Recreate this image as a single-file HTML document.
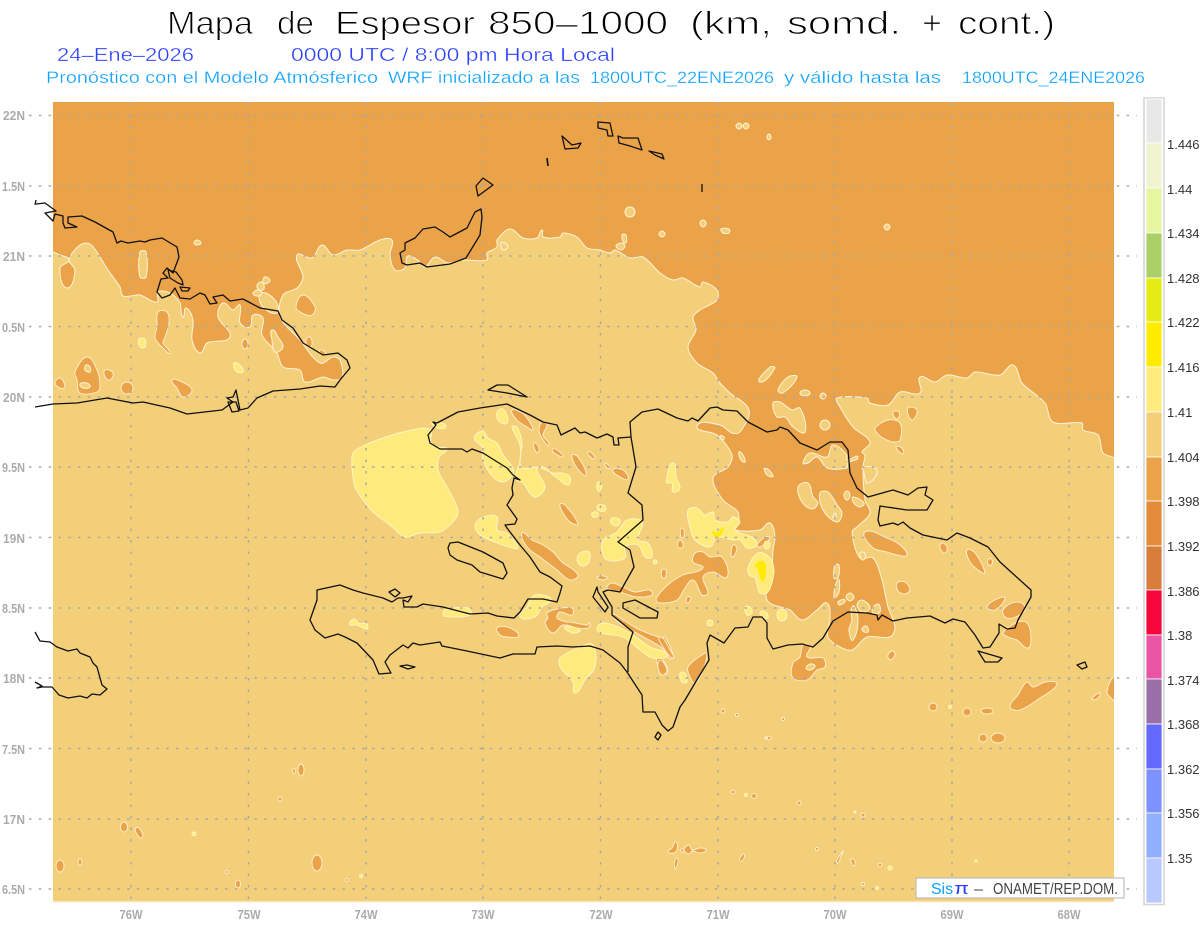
<!DOCTYPE html>
<html><head><meta charset="utf-8"><title>Mapa de Espesor</title>
<style>
html,body{margin:0;padding:0;background:#fff;width:1200px;height:927px;overflow:hidden}
svg{display:block;font-family:"Liberation Sans",sans-serif}
.l{fill:#F3CF7A;stroke:#FFF3D6;stroke-width:1;stroke-linejoin:round}
.d{fill:#EBA349;stroke:#FFF0D0;stroke-width:.9;stroke-linejoin:round}
.y{fill:#FFEB7D;stroke:#FFF6C8;stroke-width:.9;stroke-linejoin:round}
.o{fill:#FFEB00;stroke:none}
.c{fill:none;stroke:#111;stroke-width:1.3;stroke-linejoin:round}
.g{fill:none;stroke:#A8A8A8;stroke-width:1.5}
.a{fill:#ABABAB;font-weight:bold;font-size:13px}
.b{fill:#333;font-size:13px}
.t{stroke:#fff}
.t1{font-size:32px;fill:#000;stroke-width:.95px}
.t2{font-size:18px;fill:#2A3FFF;stroke-width:.35px}
.t3{font-size:16.5px;fill:#0AA0FF;stroke-width:.28px}
</style></head><body>
<svg width="1200" height="927" viewBox="0 0 1200 927" xmlns="http://www.w3.org/2000/svg">
<rect width="1200" height="927" fill="#fff"/>
<g class="t t1">
<text x="167" y="34" textLength="86" lengthAdjust="spacingAndGlyphs">Mapa</text>
<text x="277" y="34" textLength="37" lengthAdjust="spacingAndGlyphs">de</text>
<text x="335" y="34" textLength="140" lengthAdjust="spacingAndGlyphs">Espesor</text>
<text x="488" y="34" textLength="180" lengthAdjust="spacingAndGlyphs">850–1000</text>
<text x="690" y="34" textLength="82" lengthAdjust="spacingAndGlyphs">(km,</text>
<text x="787" y="34" textLength="114" lengthAdjust="spacingAndGlyphs">somd.</text>
<text x="922" y="34" textLength="20" lengthAdjust="spacingAndGlyphs">+</text>
<text x="958" y="34" textLength="97" lengthAdjust="spacingAndGlyphs">cont.)</text>
</g>
<g class="t t2">
<text x="57" y="61" textLength="137" lengthAdjust="spacingAndGlyphs">24–Ene–2026</text>
<text x="291" y="61" textLength="324" lengthAdjust="spacingAndGlyphs">0000 UTC / 8:00 pm Hora Local</text>
</g>
<g class="t t3">
<text x="46" y="83" textLength="332" lengthAdjust="spacingAndGlyphs">Pronóstico con el Modelo Atmósferico</text>
<text x="388" y="83" textLength="192" lengthAdjust="spacingAndGlyphs">WRF inicializado a las</text>
<text x="590" y="83" textLength="184" lengthAdjust="spacingAndGlyphs">1800UTC_22ENE2026</text>
<text x="784" y="83" textLength="157" lengthAdjust="spacingAndGlyphs">y válido hasta las</text>
<text x="962" y="83" textLength="183" lengthAdjust="spacingAndGlyphs">1800UTC_24ENE2026</text>
</g>

<rect x="53" y="102" width="1061" height="799" fill="#EBA349"/>
<rect x="53" y="901" width="1061" height="1.5" fill="#FBE9C0"/>
<clipPath id="mp"><rect x="53" y="102" width="1061" height="799"/></clipPath>
<g clip-path="url(#mp)">
<path class="l" d="M52 253L60 255 69 260 60 268 67 288 75 270 69 260 80 245 90 244 100 257 108 270 120 287 123 296 140 295 157 302 158 292 170 293 180 303 183 317 186 308 193 320 192 340 200 353 207 343 230 337 218 317 223 303 233 310 240 305 240 323 250 327 253 315 263 318 262 335 277 353 283 367 300 370 305 382 323 377 333 380 342 378 340 360 333 357 320 363 300 340 280 317 283 295 297 288 303 277 297 255 312 258 322 245 333 255 347 250 360 250 380 240 392 240 390 255 395 270 405 268 408 256 420 262 425 267 435 257 448 263 462 260 487 260 487 253 497 247 497 240 510 229 523 238 537 238 542 230 543 237 560 237 563 233 577 237 587 248 600 250 610 253 615 250 630 258 643 257 660 273 673 280 683 278 700 287 703 282 717 290 717 300 700 310 693 317 696 330 688 347 697 363 713 373 720 383 730 393 749 410 740 432 732 433 720 425 697 426 717 435 732 455 728 467 713 478 723 500 738 512 738 525 735 530 760 530 770 523 775 537 773 550 772 573 767 600 790 610 802 620 817 610 827 603 830 618 828 637 840 647 852 650 867 637 890 637 895 627 888 607 882 580 873 558 860 558 852 532 857 527 870 513 865 500 863 467 865 455 862 452 870 442 853 427 840 407 837 398 867 398 870 403 888 405 900 392 920 393 920 377 935 382 947 375 967 378 975 372 1000 375 1013 365 1022 383 1045 403 1053 422 1082 423 1083 430 1098 435 1103 453 1115 460 1115 902 52 902Z"/>
<!-- west Cuba dark patches -->
<path class="d" d="M158 312L167 312 169 323 165 337 163 343 170 353 163 348 155 338 157 327Z"/>
<path class="d" d="M87 357L97 370 100 387 97 392 80 393 77 380 75 372Z"/>
<path class="d" d="M55 383L60 378 65 387 60 388Z"/>
<path class="d" d="M105 370L113 373 110 380 105 377Z"/>
<circle class="d" cx="127" cy="388" r="6"/>
<path class="d" d="M172 380L182 382 192 390 183 397 177 388Z"/>
<path class="d" d="M303 295L315 307 312 315 302 313 296 307Z"/>
<ellipse class="d" cx="245" cy="344" rx="3" ry="5"/>
<path class="l" d="M86 365L90 367 90 372 85 370ZM80 384L87 383 90 387 83 388ZM140 252L146 252 146 277 140 277ZM272 330L278 337 283 347 275 352 272 340ZM261 293L275 300 277 313 262 306Z"/>
<path class="y" d="M139 339L145 339 145 347 140 347ZM234 363L240 365 243 372 236 371Z"/>
<path class="d" d="M306 340L310 337 312 345 308 347ZM320 350L325 352 325 355 321 354Z"/>
<!-- gonaives -->
<path class="d" d="M512 410L522 413 527 418 533 430 527 427 517 420Z"/>
<path class="d" d="M542 422L547 425 543 435 549 445 542 438 539 430Z"/>
<path class="d" d="M534 443L539 448 537 453Z"/>
<path class="d" d="M553 448L563 455 562 457 553 452Z"/>
<path class="d" d="M572 455L578 457 586 475 577 468Z"/>
<path class="d" d="M588 452L595 457 593 459Z"/>
<path class="d" d="M605 463L610 468 607 468Z"/>
<path class="d" d="M613 470L623 470 628 479 620 477Z"/>
<path class="d" d="M560 504L565 505 578 524 570 522 563 513Z"/>
<path class="d" d="M522 533L532 540 543 545 553 552 562 562 578 575 570 580 557 570 540 557 528 548Z"/>
<path class="d" d="M612 583L623 587 635 592 650 590 652 595 637 597 623 593 607 588Z"/>
<path class="d" d="M597 577L607 577 603 580Z"/>
<path class="d" d="M660 593L670 583 683 575 703 568 693 562 695 553 703 552 710 557 722 557 727 577 713 572 703 577 708 593 702 595 693 580 685 588 677 600 660 603 656 600Z"/>
<path class="d" d="M662 570L666 570 665 578 662 577Z"/>
<path class="d" d="M687 597L691 598 687 603Z"/>
<path class="d" d="M547 613L557 609 572 608 572 615 560 612 557 618 567 622 570 622 587 625 590 623 588 628 577 628 563 625 553 633 545 623 548 618Z"/>
<path class="d" d="M497 628L507 627 518 633 518 637 507 637 500 635Z"/>
<path class="d" d="M613 615L623 620 640 630 662 638 665 637 673 655 670 659 662 648 640 635 623 625Z"/>
<path class="d" d="M657 658L663 660 668 673 662 673 657 663Z"/>
<path class="d" d="M688 667L705 653 707 655 703 670 695 683 690 677Z"/>
<path class="d" d="M660 637L670 650 673 658 665 650Z"/>
<path class="d" d="M660 660L667 670 662 675 658 667Z"/>
<!-- central yellow -->
<path class="y" d="M688 510L697 508 705 515 713 512 715 520 728 522 733 517 740 522 735 530 752 537 757 543 755 547 747 548 740 540 733 540 717 537 710 547 695 540 690 527Z"/>
<path class="o" d="M712 532L718 532 723 528 722 534 717 537Z"/>
<path class="y" d="M748 568L758 553 770 558 774 572 768 592 760 593 755 578 749 575Z"/>
<path class="o" d="M755 565L763 561 766 570 763 582 760 577 758 570Z"/>
<path class="y" d="M667 477L673 463 676 477 680 488 673 492 672 483 667 483Z"/>
<path class="d" d="M680 540L683 547 678 547ZM682 528L684 537 681 537ZM733 545L737 548 733 557 731 555ZM765 537L770 538 760 547 757 545Z"/>
<path class="y" d="M745 607L750 607 752 613 747 615Z"/>
<circle class="y" cx="710" cy="623" r="3"/>
<ellipse class="y" cx="782" cy="615" rx="5" ry="6"/>
<path class="y" d="M760 612L766 612 768 618 764 618Z"/>
<ellipse class="y" cx="767" cy="545" rx="3" ry="4"/>
<!-- yellow west -->
<path class="y" d="M353 453L365 445 383 438 403 432 430 429 431 442 437 447 447 449 439 457 438 470 447 487 455 502 458 513 452 523 440 532 420 533 405 537 390 525 373 512 363 500 355 487 352 467Z"/>
<path class="y" d="M432 423L445 424 445 428 438 428Z"/>
<path class="y" d="M497 412L503 409 508 420 505 424 498 420Z"/>
<path class="y" d="M474 438L483 431 488 438 497 443 503 455 513 468 513 475 503 482 493 477 483 460 482 447Z"/>
<path class="y" d="M512 427L517 427 522 443 520 460 522 468 538 467 553 473 563 473 570 477 568 485 557 478 538 467 545 487 535 497 523 483 515 478 520 462 520 445Z"/>
<path class="y" d="M598 482L602 487 598 491ZM598 505L605 506 605 511 598 510ZM592 513L597 512 598 516 593 517ZM612 518L620 520 617 526 611 523Z"/>
<path class="y" d="M475 525L483 517 497 517 497 530 507 533 518 548 512 548 497 543 480 535Z"/>
<path class="y" d="M580 553L589 552 589 562 582 566 577 560Z"/>
<path class="y" d="M603 540L617 532 627 520 642 522 638 540 648 543 652 557 645 557 638 545 625 547 625 558 607 560 602 550Z"/>
<circle class="y" cx="655" cy="562" r="2"/>
<path class="y" d="M533 596L543 595 551 600 542 607 535 617 520 617 527 607Z"/>
<path class="y" d="M445 610L468 608 471 615 444 616Z"/>
<path class="y" d="M350 622L355 619 358 623 367 624 367 629 357 625 350 625Z"/>
<path class="y" d="M560 658L580 647 593 645 595 667 585 680 575 693 573 682 560 667Z"/>
<path class="y" d="M597 628L602 623 613 625 630 633 650 647 665 652 667 657 650 657 623 637 600 633Z"/>
<path class="y" d="M565 627L580 630 573 633Z"/>
<path class="y" d="M680 673L685 673 687 682 682 682Z"/>
<!-- east dark -->
<path class="d" d="M942 543L947 547 945 553 940 548Z"/>
<path class="d" d="M865 532L887 538 900 545 907 555 897 555 887 552 873 548Z"/>
<path class="d" d="M967 550L975 553 985 573 978 570 970 562Z"/>
<ellipse class="d" cx="990" cy="562" rx="2.5" ry="3.5"/>
<path class="d" d="M897 583L905 582 910 590 905 594 898 591Z"/>
<path class="d" d="M875 428L888 420 900 423 900 440 893 442 883 438 877 433Z"/>
<path class="d" d="M908 408L917 410 913 420 909 417Z"/>
<path class="d" d="M893 412L899 412 897 419Z"/>
<path class="d" d="M896 447L902 448 903 454Z"/>
<path class="d" d="M987 607L997 599 1005 598 995 610Z"/>
<path class="d" d="M1003 610L1012 603 1022 603 1025 610 1013 618 1005 617Z"/>
<path class="d" d="M1003 633L1018 622 1027 623 1031 637 1028 648 1017 640 1008 637Z"/>
<path class="d" d="M888 655L893 651 895 655 890 660Z"/>
<path class="d" d="M1010 707L1018 695 1027 682 1033 687 1045 682 1057 684 1040 698 1020 710Z"/>
<path class="d" d="M1107 692L1115 678 1115 702 1113 700Z"/>
<path class="d" d="M1092 699L1100 693 1097 699Z"/>
<path class="d" d="M803 645L810 647 807 657 823 658 825 667 817 670 807 680 793 678 793 663 800 657Z"/>
<path class="l" d="M810 664L815 666 810 670 806 668Z"/>
<circle class="d" cx="933" cy="707" r="4"/><circle class="d" cx="967" cy="712" r="4"/>
<ellipse class="d" cx="987" cy="711" rx="6" ry="3"/><circle class="d" cx="983" cy="738" r="4"/>
<ellipse class="d" cx="998" cy="738" rx="7" ry="5"/>
<!-- light patches in dark -->
<path class="l" d="M798 487L808 483 813 497 818 503 812 509 802 502Z"/>
<path class="l" d="M820 493L828 492 837 505 842 513 837 522 823 510Z"/>
<path class="l" d="M739 452L743 455 745 462 741 460ZM765 468L773 476 767 475Z"/>
<path class="l" d="M847 491L850 495 847 500 844 495Z"/>
<path class="l" d="M853 497L864 503 860 507 853 502Z"/>
<path class="l" d="M850 593L854 597 850 601 846 597Z"/>
<path class="l" d="M803 463L810 453 827 457 833 445 847 455 847 460 858 457 848 463 847 468 827 468 817 457 808 463Z"/>
<path class="l" d="M863 467L877 470 868 483 864 473Z"/>
<path class="l" d="M773 403L780 402 792 410 800 408 805 432 793 427 785 417 777 417Z"/>
<circle class="l" cx="825" cy="425" r="5"/>
<path class="l" d="M770 367L775 368 760 382ZM788 377L797 377 783 393 778 390Z"/>
<ellipse class="l" cx="805" cy="393" rx="5" ry="3"/>
<path class="l" d="M823 393L826 396 823 399 820 396Z"/>
<ellipse class="l" cx="630" cy="212" rx="5" ry="5"/>
<path class="l" d="M662 231L665 234 662 237 659 234ZM721 229L729 229 729 233 723 233ZM703 220L706 223 703 227 700 223ZM616 246L621 243 625 246 621 250ZM622 235L626 235 625 243ZM739 123L742 126 739 129 736 126ZM746 123L749 126 746 129 743 126ZM769 134L771 137 769 140 767 137ZM887 224L890 227 887 230 884 227ZM501 243L505 243 508 247 503 250Z"/>
<path class="l" d="M197 240L201 243 197 245 194 243Z"/>
<path class="l" d="M257 285L262 282 264 289 259 290ZM265 277L270 280 268 283 263 283Z"/>
<path class="l" d="M253 294L257 290 262 293 259 296Z"/>
<path class="l" d="M720 436L724 437 723 440ZM835 513L836 517 833 518Z"/>
<path class="l" d="M851 610L854 606 858 620 853 640 849 630 852 620Z"/>
<path class="l" d="M838 602L845 600 840 605ZM872 610L878 604 880 612 874 614ZM862 630L866 626 868 632ZM857 605L862 600 870 608 862 612Z"/>
<path class="l" d="M860 553L865 553 863 560ZM835 565L839 565 838 578 834 578ZM834 598L838 580 839 592Z"/>
<!-- southern dots -->
<ellipse class="d" cx="60" cy="866" rx="4" ry="6"/>
<ellipse class="d" cx="80" cy="862" rx="2" ry="3"/>
<ellipse class="d" cx="124" cy="827" rx="3.5" ry="5"/>
<path class="d" d="M135 829L139 828 143 836 140 838Z"/>
<ellipse class="d" cx="301" cy="770" rx="3" ry="6"/>
<ellipse class="d" cx="294" cy="771" rx="1.5" ry="2.5"/>
<ellipse class="d" cx="317" cy="863" rx="5" ry="8"/>
<ellipse class="d" cx="238" cy="884" rx="2.5" ry="4"/>
<circle class="d" cx="280" cy="799" r="2"/>
<circle class="d" cx="227" cy="872" r="1.6"/>
<circle class="d" cx="347" cy="880" r="1.6"/>
<circle class="y" cx="194" cy="834" r="2"/>
<circle class="y" cx="361" cy="876" r="1.6"/>
<path class="d" d="M668 852L672 848 676 842 677 850 674 853ZM684 850L689 845 692 850 700 848 706 850 700 853 692 851 689 854ZM681 849L684 850 681 852ZM675 860L678 858 677 866 675 869Z"/>
<path class="d" d="M740 858L744 854 743 860 740 861Z"/>
<path class="d" d="M836 862L843 851 841 856 838 863ZM851 859L855 861 854 866 852 864Z"/>
<g class="d"><circle cx="723" cy="711" r="2"/><circle cx="737" cy="715" r="1.6"/><circle cx="783" cy="719" r="1.6"/><circle cx="769" cy="738" r="1.8"/><circle cx="733" cy="792" r="2"/><circle cx="754" cy="796" r="2.4"/><circle cx="799" cy="803" r="2"/><circle cx="863" cy="815" r="2"/><circle cx="817" cy="849" r="1.6"/><circle cx="880" cy="865" r="1.8"/><circle cx="863" cy="884" r="1.5"/></g>
<g class="y"><circle cx="890" cy="868" r="2"/><circle cx="877" cy="888" r="1.6"/><circle cx="746" cy="795" r="1.6"/><circle cx="950" cy="707" r="1.5"/><circle cx="976" cy="861" r="1"/></g>
<g class="l"><circle cx="766" cy="738" r="1"/><circle cx="855" cy="812" r="1"/></g>
</g>
<!-- grid lines -->
<g class="g" stroke-dasharray="2.5 7.3">
<path d="M29 115.5H1137M29 186H1137M29 256H1137M29 326.5H1137M29 397H1137M29 467H1137M29 537.5H1137M29 608H1137M29 678H1137M29 748.5H1137M29 819H1137M29 889H1137"/>
</g>
<g class="g" stroke-dasharray="2.5 9">
<path d="M131 103V906M248.5 103V906M366 103V906M483 103V906M600.5 103V906M718 103V906M835 103V906M952 103V906M1069 103V906"/>
</g>
<!-- coast -->
<g class="c">
<path d="M433 422L437 423 458 412 480 408 507 404 530 415 543 422 557 425 561 435 575 428 580 433 585 432 597 438 607 434 613 437 614 445 619 445 618 438 631 437 630 422 642 412 658 409 677 418 688 421 692 418 698 421 710 408 717 407 723 410 737 411 748 422 767 432 777 430 780 427 788 430 800 443 817 450 830 442 842 442 848 450 850 473 857 488 868 497 893 490 908 495 918 488 927 487 925 495 933 500 927 510 907 510 880 506 878 520 880 526 893 523 898 525 903 522 910 528 923 535 947 540 957 533 970 538 988 547 1000 562 1031 590 1031 597 1018 620 1015 628 1007 629 999 624 999 633 990 647 983 648 975 635 965 622 953 619 945 623 930 616 907 618 893 621 882 615 878 620 877 615 867 613 848 612 833 621 823 638 813 647 802 644 788 645 773 649 767 638 767 623 762 617 753 617 748 627 735 628 724 643 710 635 707 643 709 660 695 683 685 700 680 707 673 727 668 731 662 725 655 712 643 712 642 695 627 672 620 663 603 650 590 646 573 647 557 646 537 647 535 654 513 654 500 658 467 651 442 646 440 642 420 645 413 643 408 648 403 645 390 655 385 662 391 673 379 674 373 660 357 643 345 637 338 634 325 638 315 630 310 620 317 600 317 590 340 585 353 590 363 593 383 598 392 602 398 598 403 598 412 596 408 602 403 600 404 607 417 607 423 604 443 607 470 614 488 613 497 616 514 618 520 612 528 599 543 599 557 602 560 593 562 586 550 577 540 572 530 557 520 545 507 528 505 525 515 524 517 519 507 505 513 495 512 488 514 478 520 480 513 475 507 468 483 453 472 449 467 452 462 449 440 449 430 443 428 435 436 425Z"/>
<path d="M631 437L636 467 628 493 642 505 643 520 618 542 630 550 634 567 620 592 608 590 603 592 612 607 612 615 633 632 628 647 628 672"/>
<path d="M597 587L593 597 605 612 608 607 598 592Z"/>
<path d="M623 603L635 600 658 612 657 618 640 618 623 608Z"/>
<path d="M448 548L450 543 458 542 483 552 503 563 507 573 503 579 480 572 472 565 457 560 450 555Z"/>
<path d="M488 390L497 385 508 385 527 397 507 393Z"/>
<path d="M400 666L407 665 415 667 408 669Z"/>
<path d="M389 592L395 589 400 593 395 597Z"/>
<path d="M978 651L1002 658 998 662 985 662Z"/>
<path d="M655 737L658 732 661 735 658 740Z"/>
<path d="M1077 665L1085 662 1087 667 1082 669Z"/>
<path d="M402 263L400 253 405 250 405 243 415 238 423 229 435 227 443 232 450 237 467 228 475 212 481 209 482 217 480 235 466 258 450 264 427 267 420 263 407 265Z"/>
<path d="M483 178L493 185 478 196 476 186Z"/>
<path d="M562 136L572 145 581 143 578 148 565 149Z"/>
<path d="M547 158L548 166" stroke-width="1.6"/>
<path d="M598 122L610 123 612 132 613 136 608 136 607 130 598 128Z"/>
<path d="M618 136L623 138 638 138 642 150 630 146 619 143Z"/>
<path d="M649 151L662 154 664 159 655 155Z"/>
<path d="M702 184L702 192"/>
<path d="M35 205L36 200M36 204L45 203 56 211 45 213 53 221 55 214 63 216 63 223 65 228 77 227 68 223 68 217 82 216 95 222 113 232 117 243 121 241 128 243 140 241 145 242 150 240 162 238 167 241 177 247 179 257 173 273 167 268 163 273 168 278 161 279 157 292 162 298 170 295 175 288 180 298 190 299 200 293 205 295 210 304 217 303 213 297 223 295 230 301 243 299 260 308 278 311 282 320 293 328 303 343 323 355 338 353 347 360 350 368 340 380 335 387 320 386 300 389 273 391 257 398 248 408 240 410 236 390 233 397 227 398 233 402 222 410 187 414 170 408 143 402 133 403 107 398 77 403 53 404 35 407"/>
<path d="M168 270L176 272 182 280 183 285 178 283 170 278ZM180 287L190 288 188 291 182 291Z"/>
<path d="M228 402L236 402 239 411 232 412Z"/>
<path d="M35 632L40 641 50 642 57 647 68 651 77 649 80 653 90 657 93 663 97 667 102 685 107 689 100 695 92 694 87 698 80 696 68 698 59 695 52 687 42 687 37 688 42 686 35 682"/>
</g>
<!-- axis labels -->
<g class="a" text-anchor="end">
<text x="25" y="120" textLength="22" lengthAdjust="spacingAndGlyphs">22N</text><text x="25" y="191" textLength="23" lengthAdjust="spacingAndGlyphs">1.5N</text><text x="25" y="261" textLength="22" lengthAdjust="spacingAndGlyphs">21N</text><text x="25" y="332" textLength="23" lengthAdjust="spacingAndGlyphs">0.5N</text><text x="25" y="402" textLength="22" lengthAdjust="spacingAndGlyphs">20N</text><text x="25" y="472" textLength="23" lengthAdjust="spacingAndGlyphs">9.5N</text><text x="25" y="543" textLength="22" lengthAdjust="spacingAndGlyphs">19N</text><text x="25" y="613" textLength="23" lengthAdjust="spacingAndGlyphs">8.5N</text><text x="25" y="683" textLength="22" lengthAdjust="spacingAndGlyphs">18N</text><text x="25" y="754" textLength="23" lengthAdjust="spacingAndGlyphs">7.5N</text><text x="25" y="824" textLength="22" lengthAdjust="spacingAndGlyphs">17N</text><text x="25" y="894" textLength="23" lengthAdjust="spacingAndGlyphs">6.5N</text>
</g>
<g class="a" text-anchor="middle">
<text x="131" y="919" textLength="23" lengthAdjust="spacingAndGlyphs">76W</text><text x="249" y="919" textLength="23" lengthAdjust="spacingAndGlyphs">75W</text><text x="366" y="919" textLength="23" lengthAdjust="spacingAndGlyphs">74W</text><text x="483" y="919" textLength="23" lengthAdjust="spacingAndGlyphs">73W</text><text x="601" y="919" textLength="23" lengthAdjust="spacingAndGlyphs">72W</text><text x="718" y="919" textLength="23" lengthAdjust="spacingAndGlyphs">71W</text><text x="835" y="919" textLength="23" lengthAdjust="spacingAndGlyphs">70W</text><text x="952" y="919" textLength="23" lengthAdjust="spacingAndGlyphs">69W</text><text x="1069" y="919" textLength="23" lengthAdjust="spacingAndGlyphs">68W</text>
</g>
<!-- colorbar -->
<rect x="1144" y="98" width="20" height="806.5" fill="#fff" stroke="#D4D4D4" stroke-width="1.5"/>
<g stroke="#fff" stroke-width=".8">
<rect x="1146" y="99" width="16" height="44" fill="#E8E8E8"/>
<rect x="1146" y="143" width="16" height="45" fill="#F0F5CF"/>
<rect x="1146" y="188" width="16" height="45" fill="#E6F5A0"/>
<rect x="1146" y="233" width="16" height="45" fill="#ABD068"/>
<rect x="1146" y="278" width="16" height="44" fill="#E4EC14"/>
<rect x="1146" y="322" width="16" height="45" fill="#FFEB00"/>
<rect x="1146" y="367" width="16" height="45" fill="#FFEB7D"/>
<rect x="1146" y="412" width="16" height="45" fill="#F3CF7A"/>
<rect x="1146" y="457" width="16" height="44" fill="#EBA349"/>
<rect x="1146" y="501" width="16" height="45" fill="#E58C3A"/>
<rect x="1146" y="546" width="16" height="44" fill="#D97D3C"/>
<rect x="1146" y="590" width="16" height="45" fill="#F5073C"/>
<rect x="1146" y="635" width="16" height="44" fill="#EB55A5"/>
<rect x="1146" y="679" width="16" height="45" fill="#9A6FA8"/>
<rect x="1146" y="724" width="16" height="45" fill="#6469FF"/>
<rect x="1146" y="769" width="16" height="44" fill="#7D91FF"/>
<rect x="1146" y="813" width="16" height="45" fill="#91AFFF"/>
<rect x="1146" y="858" width="16" height="45" fill="#B9C8FF"/>
</g>
<g class="b">
<text x="1167" y="149">1.446</text><text x="1167" y="194">1.44</text><text x="1167" y="238">1.434</text><text x="1167" y="283">1.428</text><text x="1167" y="327">1.422</text><text x="1167" y="372">1.416</text><text x="1167" y="417">1.41</text><text x="1167" y="462">1.404</text><text x="1167" y="506">1.398</text><text x="1167" y="551">1.392</text><text x="1167" y="596">1.386</text><text x="1167" y="640">1.38</text><text x="1167" y="685">1.374</text><text x="1167" y="729">1.368</text><text x="1167" y="774">1.362</text><text x="1167" y="818">1.356</text><text x="1167" y="863">1.35</text>
</g>
<!-- logo box -->
<rect x="916" y="878" width="208" height="20" fill="#fff" stroke="#BDBDBD" stroke-width="1.2"/>
<text x="931" y="894" font-size="15.5" fill="#0AA0FF" textLength="22" lengthAdjust="spacingAndGlyphs">Sis</text>
<text x="954" y="894" font-size="17" fill="#2A3FFF" textLength="15" lengthAdjust="spacingAndGlyphs">π</text>
<text x="974" y="894" font-size="15" fill="#444" textLength="9" lengthAdjust="spacingAndGlyphs">–</text>
<text x="993" y="894" font-size="15.5" fill="#444" textLength="125" lengthAdjust="spacingAndGlyphs">ONAMET/REP.DOM.</text>
</svg>
<script>
document.querySelectorAll('path.l,path.d,path.y,path.o').forEach(function(e){
  var out='';
  function edge(q){return q[0]<=52||q[0]>=1115||q[1]>=902;}
  e.getAttribute('d').split('M').forEach(function(s){
    var n=s.match(/-?[\d.]+/g);
    if(!n||n.length<6)return;
    var p=[],i;
    for(i=0;i+1<n.length;i+=2)p.push([+n[i],+n[i+1]]);
    var c=p.length,dirs=[];
    for(i=0;i<c;i++){
      var a=p[(i-1+c)%c],b=p[(i+1)%c],dx=b[0]-a[0],dy=b[1]-a[1],m=Math.hypot(dx,dy)||1;
      dirs.push([dx/m,dy/m]);
    }
    out+='M'+p[0][0]+' '+p[0][1];
    for(i=0;i<c;i++){
      var j=(i+1)%c,q=p[i],r=p[j],len=Math.hypot(r[0]-q[0],r[1]-q[1])*.3;
      if(edge(q)&&edge(r)){out+='L'+r[0]+' '+r[1];continue;}
      out+='C'+(q[0]+dirs[i][0]*len).toFixed(1)+' '+(q[1]+dirs[i][1]*len).toFixed(1)+' '+
           (r[0]-dirs[j][0]*len).toFixed(1)+' '+(r[1]-dirs[j][1]*len).toFixed(1)+' '+r[0]+' '+r[1];
    }
    out+='Z';
  });
  if(out)e.setAttribute('d',out);
});
</script>
</body></html>
